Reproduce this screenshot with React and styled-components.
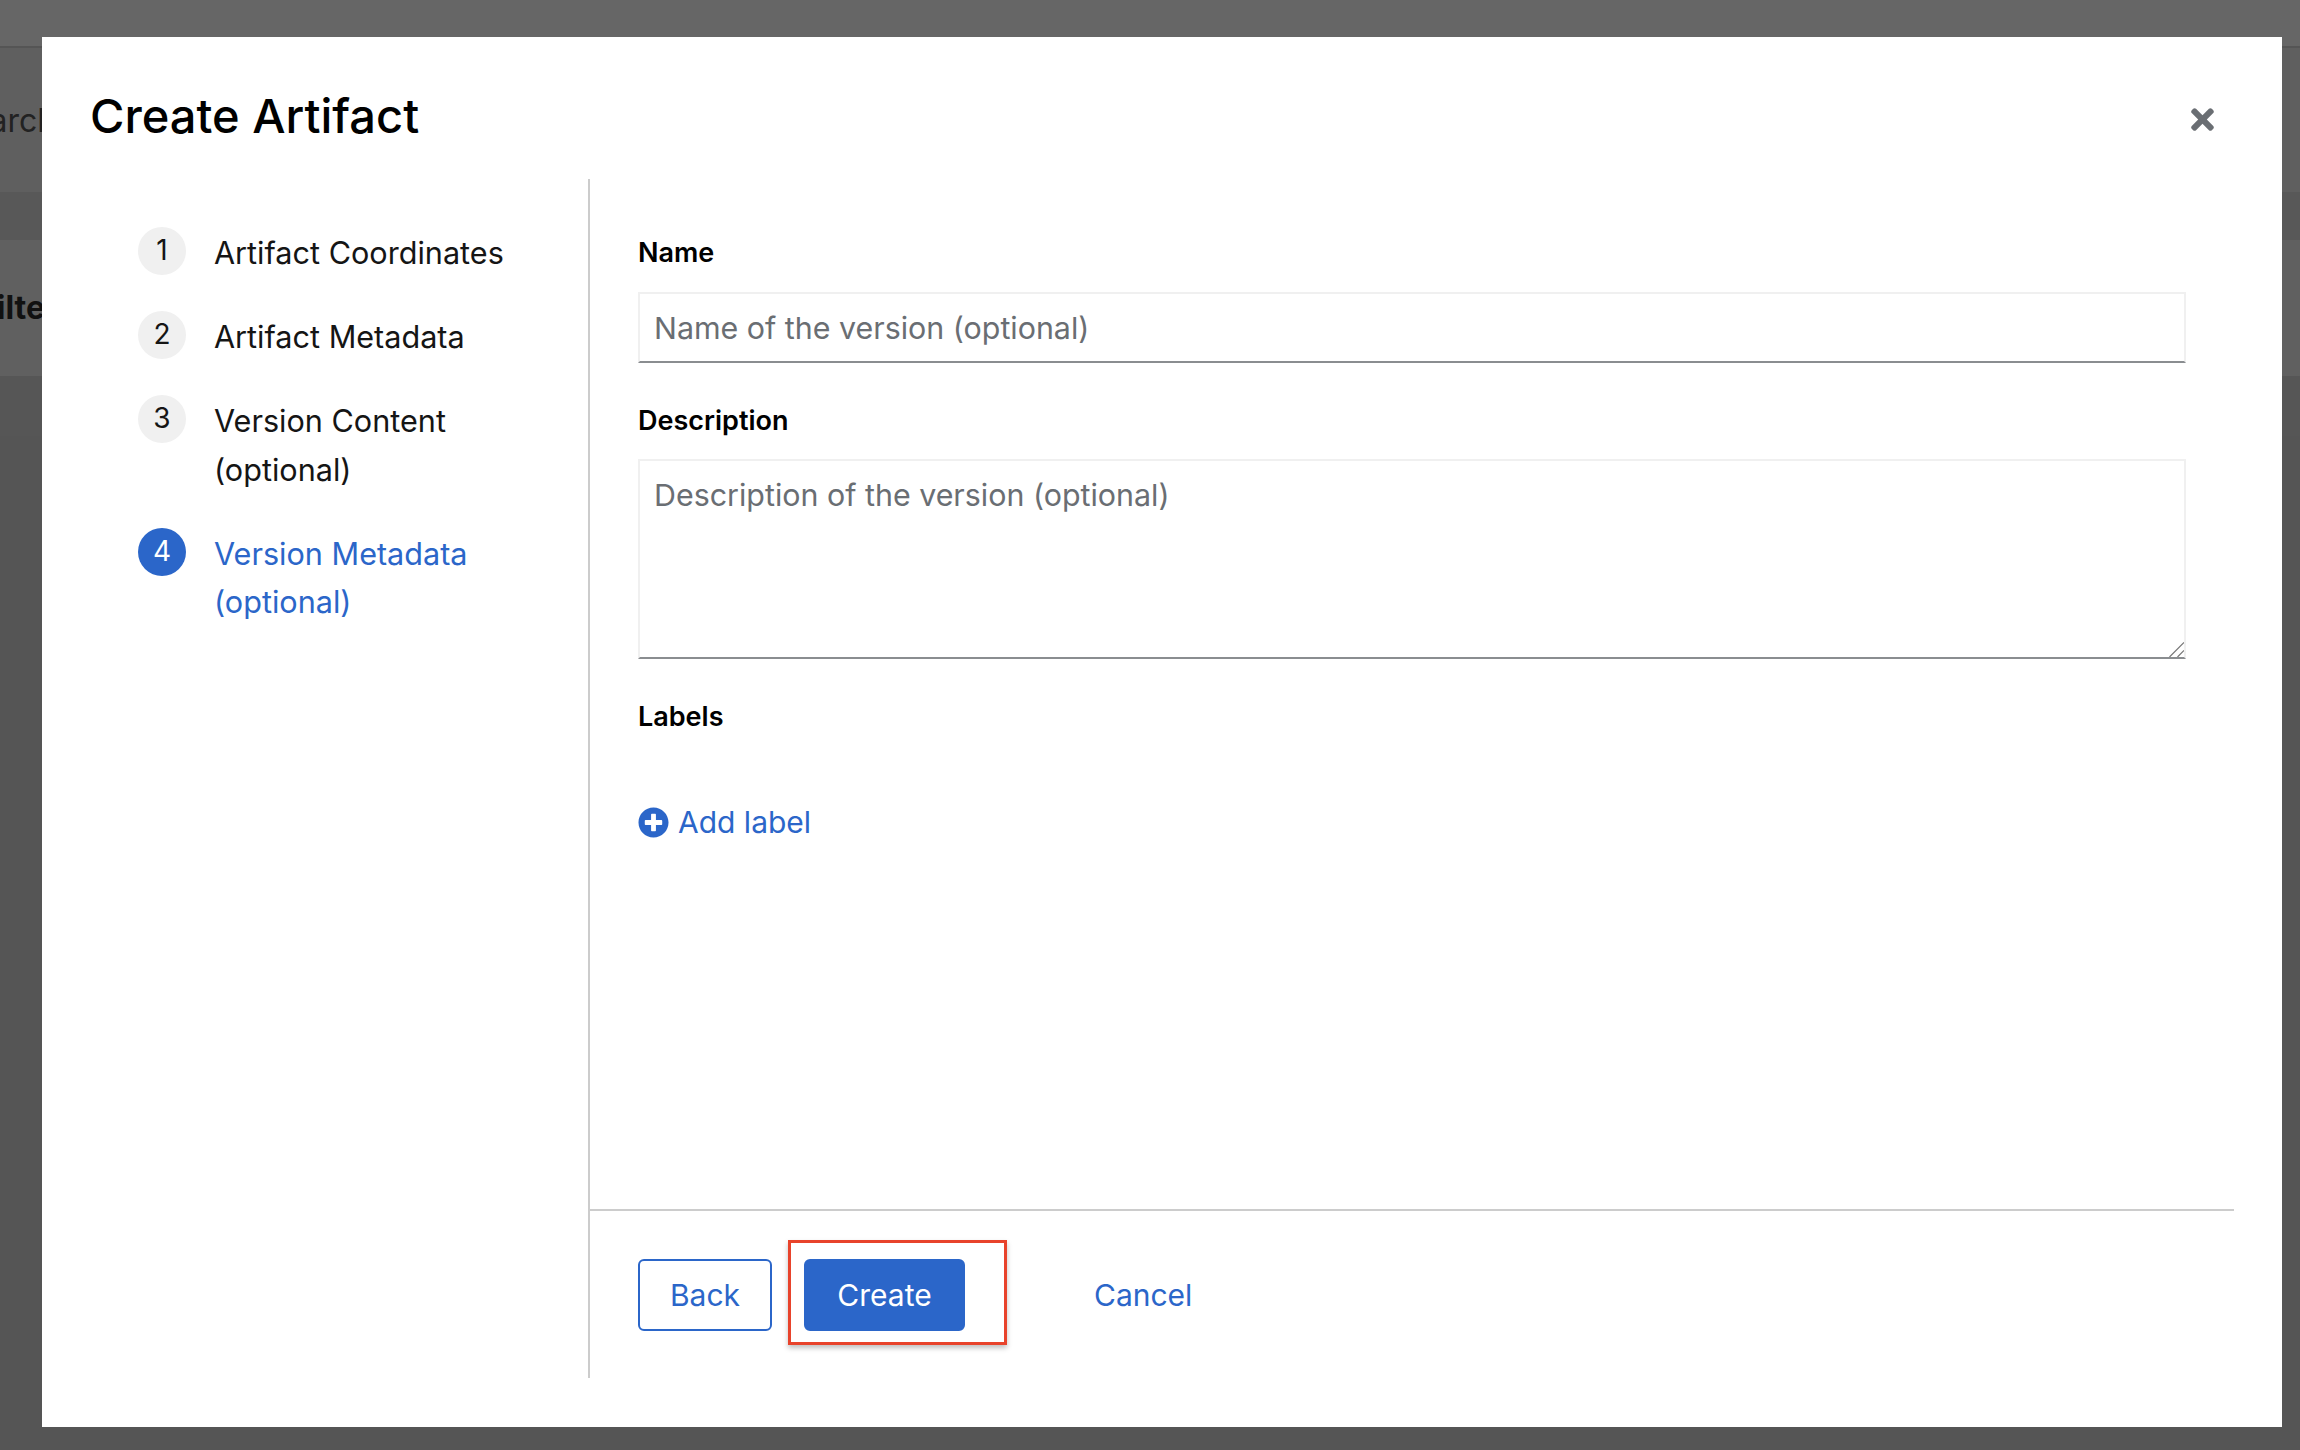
import styled, { createGlobalStyle } from "styled-components";
import { FaTimes, FaPlusCircle } from "react-icons/fa";

const GlobalStyle = createGlobalStyle`
  html, body {
    margin: 0;
    padding: 0;
    background: #525252;
  }
  * {
    box-sizing: border-box;
  }
`;

const blue = "#2b66c9";
const font = `Inter, "Liberation Sans", sans-serif`;

const Page = styled.div`
  position: relative;
  width: 2300px;
  height: 1450px;
  overflow: hidden;
  background: #555555;
  font-family: ${font};
`;

const TopBar = styled.div`
  height: 48px;
  background: #666666;
  border-bottom: 2px solid #555555;
`;

const SearchRow = styled.div`
  height: 144px;
  background: #5f5f5f;
  color: #222222;
  font-size: 32px;
  padding-top: 53px;
  line-height: 40px;
  white-space: nowrap;
  span {
    display: block;
    margin-left: -50px;
  }
`;

const Band = styled.div`
  height: ${(p) => p.$h}px;
  background: ${(p) => p.$bg};
`;

const FilterRow = styled.div`
  height: 136px;
  background: #606060;
  color: #111111;
  font-size: 32px;
  font-weight: 700;
  padding-top: 48px;
  line-height: 40px;
  white-space: nowrap;
  span {
    display: block;
    margin-left: -22px;
  }
`;

const Modal = styled.div`
  position: absolute;
  left: 42px;
  top: 37px;
  width: 2240px;
  height: 1390px;
  background: #ffffff;
  display: flex;
  flex-direction: column;
  padding: 0 48px 49px 0;
`;

const Header = styled.header`
  height: 142px;
  flex: none;
  display: flex;
  align-items: flex-start;
  justify-content: space-between;
  padding: 50px 0 0 48px;
`;

const Title = styled.h1`
  margin: 0;
  font-size: 47px;
  line-height: 58px;
  font-weight: 500;
  color: #000000;
`;

const CloseButton = styled.button`
  border: 0;
  padding: 0;
  background: none;
  color: #6a6e73;
  width: 34px;
  height: 34px;
  margin: 15px 15px 0 0;
  display: flex;
  align-items: center;
  justify-content: center;
`;

const Body = styled.div`
  flex: 1;
  display: flex;
  min-height: 0;
`;

const Nav = styled.nav`
  width: 548px;
  flex: none;
  border-right: 2px solid #cccccc;
  padding: 48px 0 0 96px;
  display: flex;
  flex-direction: column;
  gap: 33.5px;
`;

const Step = styled.div`
  display: flex;
  gap: 28px;
  color: ${(p) => (p.$active ? blue : "#151515")};
  font-size: 30.6px;
  line-height: 48.5px;
`;

const StepNumber = styled.span`
  flex: none;
  width: 48px;
  height: 48px;
  border-radius: 50%;
  background: ${(p) => (p.$active ? blue : "#f0f0f0")};
  color: ${(p) => (p.$active ? "#ffffff" : "#151515")};
  font-size: 28px;
  line-height: 47px;
  text-align: center;
`;

const StepLabel = styled.span`
  max-width: 310px;
  padding-top: 2px;
`;

const Main = styled.div`
  flex: 1;
  display: flex;
  flex-direction: column;
  min-width: 0;
`;

const Form = styled.form`
  flex: 1;
  padding: 52px 48px 0 48px;
`;

const Label = styled.label`
  display: block;
  font-size: 27px;
  line-height: 42px;
  padding-top: 1px;
  font-weight: 600;
  color: #000000;
  margin-bottom: ${(p) => p.$below - 1}px;
`;

const Field = styled.div`
  margin-bottom: 36px;
`;

const TextInput = styled.input`
  display: block;
  width: 100%;
  height: 71px;
  border: 2px solid #f0f0f0;
  border-bottom-color: #8a8d90;
  padding: 0 14px;
  font-family: ${font};
  font-size: 30.4px;
  outline: none;
  &::placeholder {
    color: #6a6e73;
    opacity: 1;
  }
`;

const AreaWrap = styled.div`
  position: relative;
`;

const TextArea = styled.textarea`
  display: block;
  width: 100%;
  height: 200px;
  border: 2px solid #f0f0f0;
  border-bottom-color: #8a8d90;
  border-radius: 0;
  padding: 10px 14px;
  font-family: ${font};
  font-size: 30.4px;
  line-height: 48px;
  outline: none;
  resize: none;
  &::placeholder {
    color: #6a6e73;
    opacity: 1;
  }
`;

const ResizeGrip = styled.svg`
  position: absolute;
  right: 2px;
  bottom: 2px;
  width: 15px;
  height: 15px;
`;

const AddLabel = styled.a`
  display: flex;
  align-items: center;
  gap: 9px;
  height: 48px;
  color: ${blue};
  font-size: 30px;
`;

const Footer = styled.footer`
  flex: none;
  border-top: 2px solid #cccccc;
  padding: 48px 48px 47px 48px;
  display: flex;
  align-items: center;
`;

const Button = styled.button`
  height: 72px;
  width: ${(p) => p.$w}px;
  border-radius: 6px;
  border: 2px solid ${blue};
  background: ${(p) => (p.$primary ? blue : "#ffffff")};
  color: ${(p) => (p.$primary ? "#ffffff" : blue)};
  font-family: ${font};
  font-size: 30px;
  padding: 0;
`;

const Highlight = styled.div`
  position: relative;
  margin-left: 32px;
  &::after {
    content: "";
    position: absolute;
    left: -16px;
    right: -42px;
    top: -19px;
    bottom: -14px;
    border: 3px solid #e8432b;
    box-shadow: 0 3px 5px rgba(0, 0, 0, 0.25);
  }
`;

const CancelLink = styled.a`
  margin-left: 129px;
  color: ${blue};
  font-size: 30px;
`;

const App = () => {
  return (
    <Page>
      <GlobalStyle />
      <TopBar />
      <SearchRow>
        <span>Search</span>
      </SearchRow>
      <Band $h={48} $bg="#585858" />
      <FilterRow>
        <span>Filter</span>
      </FilterRow>
      <Band $h={60} $bg="#565656" />

      <Modal>
        <Header>
          <Title>Create Artifact</Title>
          <CloseButton aria-label="Close">
            <FaTimes size={33} />
          </CloseButton>
        </Header>
        <Body>
          <Nav>
            <Step>
              <StepNumber>1</StepNumber>
              <StepLabel>Artifact Coordinates</StepLabel>
            </Step>
            <Step>
              <StepNumber>2</StepNumber>
              <StepLabel>Artifact Metadata</StepLabel>
            </Step>
            <Step>
              <StepNumber>3</StepNumber>
              <StepLabel>Version Content (optional)</StepLabel>
            </Step>
            <Step $active>
              <StepNumber $active>4</StepNumber>
              <StepLabel>Version Metadata (optional)</StepLabel>
            </Step>
          </Nav>
          <Main>
            <Form>
              <Field>
                <Label $below={19}>Name</Label>
                <TextInput placeholder="Name of the version (optional)" />
              </Field>
              <Field>
                <Label $below={18}>Description</Label>
                <AreaWrap>
                  <TextArea placeholder="Description of the version (optional)" />
                  <ResizeGrip viewBox="0 0 15 15">
                    <path d="M0.5 15 L15 0.5 M8.5 15 L15 8.5" stroke="#777777" strokeWidth="1.2" fill="none" />
                  </ResizeGrip>
                </AreaWrap>
              </Field>
              <Label $below={61}>Labels</Label>
              <AddLabel>
                <FaPlusCircle size={31} />
                Add label
              </AddLabel>
            </Form>
            <Footer>
              <Button $w={134}>Back</Button>
              <Highlight>
                <Button $primary $w={161}>
                  Create
                </Button>
              </Highlight>
              <CancelLink>Cancel</CancelLink>
            </Footer>
          </Main>
        </Body>
      </Modal>
    </Page>
  );
};

export default App;
